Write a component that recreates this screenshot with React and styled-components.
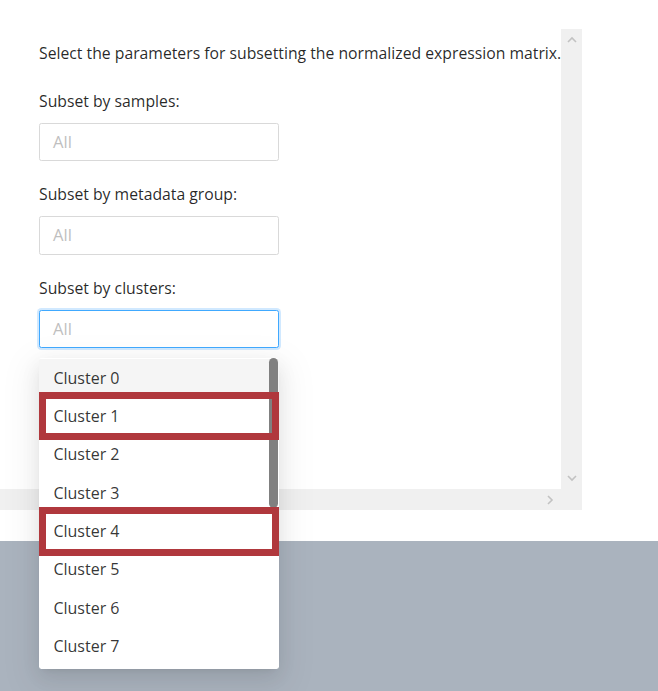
import React from "react";
import styled, { createGlobalStyle } from "styled-components";

const GlobalStyle = createGlobalStyle`
  body {
    margin: 0;
    background: #fff;
    font-family: "Open Sans", "Noto Sans", sans-serif;
  }
`;

const Page = styled.div`
  display: flex;
  flex-direction: column;
  width: 658px;
  height: 691px;
  overflow: hidden;
`;

const Top = styled.section`
  height: 541px;
  padding-top: 29px;
  box-sizing: border-box;
  background: #fff;
`;

const Footer = styled.footer`
  flex: 1;
  background: #aab3be;
`;

const Panel = styled.div`
  display: grid;
  grid-template-columns: 561px 21px;
  grid-template-rows: 460px 21px;
  width: 582px;
`;

const Content = styled.div`
  padding: 11.3px 0 0 39px;
  box-sizing: border-box;
  font-size: 15.75px;
  line-height: 26.4px;
  color: rgba(0, 0, 0, 0.85);
`;

const Intro = styled.p`
  margin: 0 0 21px;
  white-space: nowrap;
`;

const Field = styled.div`
  margin-bottom: 20px;
`;

const Label = styled.div`
  margin-bottom: 8.7px;
`;

const SelectWrap = styled.div`
  position: relative;
  width: 240px;
`;

const SelectBox = styled.div`
  height: 38.4px;
  box-sizing: border-box;
  display: flex;
  align-items: center;
  padding: 0 13px;
  border: 1px solid ${(p) => (p.$focused ? "#40a9ff" : "#d9d9d9")};
  border-radius: 2.4px;
  background: #fff;
  box-shadow: ${(p) => (p.$focused ? "0 0 0 2px rgba(24, 144, 255, 0.2)" : "none")};
`;

const Placeholder = styled.span`
  color: #bfbfbf;
  font-size: 16.6px;
`;

const Dropdown = styled.div`
  position: absolute;
  z-index: 10;
  top: calc(100% + 9.6px);
  left: 0;
  width: 240px;
  height: 311px;
  overflow: hidden;
  background: #fff;
  border-radius: 2.4px;
  box-shadow: 0 3.6px 7px -5px rgba(0, 0, 0, 0.12),
    0 7px 19px 0 rgba(0, 0, 0, 0.08), 0 11px 34px 10px rgba(0, 0, 0, 0.05);
`;

const List = styled.div`
  padding-top: 0.8px;
`;

const Option = styled.div`
  position: relative;
  height: 38.4px;
  display: flex;
  align-items: center;
  padding: 0 14.4px;
  font-size: 16px;
  color: rgba(0, 0, 0, 0.8);
  background: ${(p) => (p.$active ? "#f5f5f5" : "#fff")};

  ${(p) =>
    p.$marked &&
    `
    &::after {
      content: "";
      position: absolute;
      z-index: 2;
      top: -5px;
      bottom: -5px;
      left: 0;
      right: 0;
      border: 7px solid #b0383d;
    }
  `}
`;

const Thumb = styled.div`
  position: absolute;
  z-index: 1;
  top: 0;
  right: 1px;
  width: 9px;
  height: 150px;
  border-radius: 5px;
  background: #808080;
`;

const Track = styled.div`
  background: #f0f0f0;
  display: flex;
  flex-direction: ${(p) => (p.$vertical ? "column" : "row")};
  justify-content: ${(p) => (p.$vertical ? "space-between" : "flex-end")};
  align-items: center;
  padding: ${(p) => (p.$vertical ? "7px 0" : "0 6px")};
  box-sizing: border-box;
`;

const Corner = styled.div`
  background: #f0f0f0;
`;

const Arrow = ({ dir }) => {
  const pts = {
    up: "1,6 5,2 9,6",
    down: "1,2 5,6 9,2",
    right: "2,1 6,5 2,9",
  }[dir];
  return (
    <svg width="10" height={dir === "right" ? 10 : 8} viewBox={dir === "right" ? "0 0 8 10" : "0 0 10 8"}>
      <polyline points={pts} fill="none" stroke="#c2c2c2" strokeWidth="1.6" />
    </svg>
  );
};

const clusters = Array.from({ length: 8 }, (_, i) => `Cluster ${i}`);

export default function App() {
  return (
    <Page>
      <GlobalStyle />
      <Top>
        <Panel>
          <Content>
            <Intro>Select the parameters for subsetting the normalized expression matrix.</Intro>
            <Field>
              <Label>Subset by samples:</Label>
              <SelectWrap>
                <SelectBox>
                  <Placeholder>All</Placeholder>
                </SelectBox>
              </SelectWrap>
            </Field>
            <Field>
              <Label>Subset by metadata group:</Label>
              <SelectWrap>
                <SelectBox>
                  <Placeholder>All</Placeholder>
                </SelectBox>
              </SelectWrap>
            </Field>
            <Field>
              <Label>Subset by clusters:</Label>
              <SelectWrap>
                <SelectBox $focused>
                  <Placeholder>All</Placeholder>
                </SelectBox>
                <Dropdown>
                  <List>
                    {clusters.map((c, i) => (
                      <Option key={c} $active={i === 0} $marked={i === 1 || i === 4}>
                        {c}
                      </Option>
                    ))}
                  </List>
                  <Thumb />
                </Dropdown>
              </SelectWrap>
            </Field>
          </Content>
          <Track $vertical>
            <Arrow dir="up" />
            <Arrow dir="down" />
          </Track>
          <Track>
            <Arrow dir="right" />
          </Track>
          <Corner />
        </Panel>
      </Top>
      <Footer />
    </Page>
  );
}
